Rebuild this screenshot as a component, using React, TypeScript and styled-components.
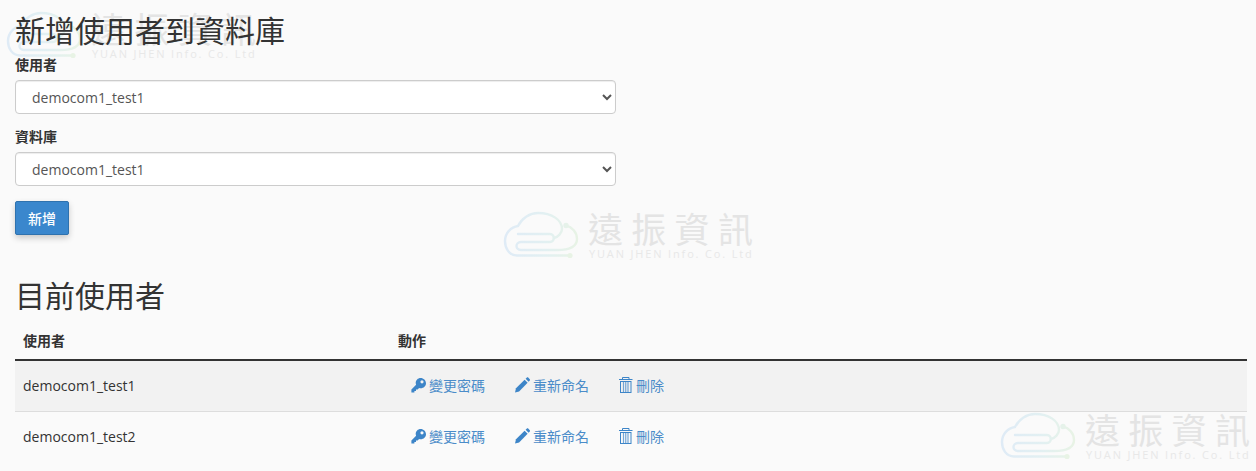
import React from 'react';
import styled, { createGlobalStyle } from 'styled-components';

const users = ['democom1_test1', 'democom1_test2'];

const GlobalStyle = createGlobalStyle`
  html, body { margin: 0; padding: 0; background: #fafafa; }
  body {
    font-family: "Open Sans", "Noto Sans CJK TC", sans-serif;
    font-size: 14px;
    color: #333;
    overflow: hidden;
  }
`;

const Page = styled.div`
  position: relative;
  width: 1256px;
  height: 471px;
  overflow: hidden;
`;

const Content = styled.div`
  position: relative;
  z-index: 1;
  padding: 0 9px 0 15px;
`;

const Mark = styled.div<{ $x: number; $y: number }>`
  position: absolute;
  left: ${p => p.$x}px;
  top: ${p => p.$y}px;
  display: flex;
  gap: 3px;
  pointer-events: none;
`;

const MarkText = styled.div`
  display: flex;
  flex-direction: column;
  width: 165px;
  padding-top: 5px;
`;

const MarkName = styled.div`
  font-family: "Noto Sans CJK TC", sans-serif;
  font-size: 35px;
  font-weight: 400;
  line-height: 36px;
  letter-spacing: 8.3px;
  margin-right: -9px;
  color: #e4e4e4;
  white-space: nowrap;
`;

const MarkSub = styled.div`
  font-size: 11px;
  font-weight: 400;
  line-height: 14px;
  letter-spacing: 1.85px;
  margin-top: 1px;
  padding-left: 1px;
  color: #e8e8e8;
  white-space: nowrap;
`;

const Heading = styled.h1`
  margin: 0;
  font-size: 30px;
  font-weight: 400;
  line-height: 33px;
  color: #333;
`;

const FormHeading = styled(Heading)`
  padding-top: 14px;
`;

const Field = styled.div`
  width: 601px;
  margin-top: 8px;
  margin-bottom: 13px;
`;

const Label = styled.label`
  display: block;
  font-weight: 700;
  font-size: 14px;
  line-height: 20px;
  margin-bottom: 5px;
`;

const Select = styled.select`
  display: block;
  width: 100%;
  height: 34px;
  box-sizing: border-box;
  padding: 6px 12px;
  font: inherit;
  font-size: 14px;
  color: #555;
  background: #fff;
  border: 1px solid #ccc;
  border-radius: 4px;
  box-shadow: inset 0 1px 1px rgba(0, 0, 0, 0.075);
`;

const SubmitButton = styled.button`
  display: block;
  width: 54px;
  height: 34px;
  margin-top: 15px;
  padding: 0;
  font: inherit;
  font-size: 14px;
  font-weight: 500;
  color: #fff;
  background: #3a87cd;
  border: 1px solid #2f72ae;
  border-radius: 2px;
  box-shadow: 0 3px 6px rgba(0, 0, 0, 0.2);
`;

const SectionHeading = styled(Heading)`
  margin-top: 44px;
`;

const Table = styled.table`
  width: 100%;
  margin-top: 8px;
  border-collapse: collapse;
  table-layout: fixed;
`;

const HeadCell = styled.th<{ $width?: number }>`
  width: ${p => (p.$width ? `${p.$width}px` : 'auto')};
  box-sizing: border-box;
  height: 40px;
  padding: 0 8px;
  text-align: left;
  font-size: 14px;
  font-weight: 700;
  border-bottom: 2px solid #333;
`;

const Row = styled.tr<{ $shaded?: boolean }>`
  background: ${p => (p.$shaded ? '#f2f2f2' : 'transparent')};
  &:last-child td { border-bottom: 0; }
`;

const Cell = styled.td`
  height: 51px;
  padding: 0 8px;
  box-sizing: border-box;
  font-size: 14px;
  border-bottom: 1px solid #ddd;
`;

const Actions = styled.div`
  display: flex;
  padding-left: 13px;
  margin-bottom: 2px;
  gap: 30px;
`;

const ActionLink = styled.a`
  display: flex;
  align-items: center;
  gap: 3px;
  color: #4a8cc9;
  font-size: 14px;
  text-decoration: none;
`;

const KeyIcon = () => (
  <svg width="15" height="16" viewBox="0 0 15 16" fill="#3d85c8">
    <path
      fillRule="evenodd"
      d="M9.6 1C12.5 1 15 3.3 15 6.2C15 9 12.6 11.2 9.8 11.2C9.2 11.2 8.6 11.1 8.1 10.9L6.6 12.4H5V14H3.4V15.5H0.4V12.4L5.1 7.7C4.9 7.2 4.7 6.7 4.7 6.1C4.7 3.3 6.9 1 9.6 1ZM11 3.2A1.6 1.6 0 1 0 11 6.4A1.6 1.6 0 1 0 11 3.2Z"
    />
  </svg>
);

const PencilIcon = () => (
  <svg width="15" height="16" viewBox="0 0 15 16" fill="#3d85c8">
    <path d="M0 15.5L1 11.2L9.6 2.8L12.6 5.8L4.1 14.4Z" />
    <path d="M10.6 1.8L11.9 0.6C12.3 0.2 12.8 0.2 13.2 0.6L14.8 2.2C15.1 2.6 15.1 3.1 14.8 3.5L13.6 4.8Z" />
  </svg>
);

const TrashIcon = () => (
  <svg width="14" height="16" viewBox="0 0 14 16" fill="none" stroke="#3d85c8" strokeWidth="1">
    <path d="M0 2.5H13.5M3.5 2.5V0.5H10V2.5" />
    <rect x="1.5" y="4.5" width="10.5" height="11" />
    <path d="M4.5 5V15M6.75 5V15M9 5V15" strokeWidth="1.2" opacity="0.7" />
  </svg>
);

const Watermark = ({ x, y }: { x: number; y: number }) => (
  <Mark $x={x} $y={y}>
    <svg width="85" height="60" viewBox="0 0 85 60" fill="none" strokeWidth="2.4" strokeLinecap="round">
      <defs>
        <linearGradient id="mark-fade" gradientUnits="userSpaceOnUse" x1="5" y1="0" x2="78" y2="0">
          <stop offset="0" stopColor="#dfebf6" />
          <stop offset="0.55" stopColor="#e2f0f2" />
          <stop offset="1" stopColor="#e8f3e5" />
        </linearGradient>
      </defs>
      <g stroke="url(#mark-fade)">
        <path d="M70 50.5H17C9 50.5 5 43 5 36C5 28 11 22 18 21C22 13 30 8 38 8C52 8 62 15 62 24C62 28 58 32 54 33" />
        <path d="M18 29H50C55 29 55 37 50 37H21C15 37 15 45 21 45H57C68 45 77 42 77 34C77 27 72 22 66 20.5" />
        <circle cx="66" cy="20.5" r="1.5" />
      </g>
      <circle cx="70" cy="50.5" r="2.6" fill="#e8f3e5" />
    </svg>
    <MarkText>
      <MarkName>遠振資訊</MarkName>
      <MarkSub>YUAN JHEN Info. Co. Ltd</MarkSub>
    </MarkText>
  </Mark>
);

export default function App() {
  return (
    <Page>
      <GlobalStyle />
      <Watermark x={3} y={5} />
      <Watermark x={500} y={205} />
      <Watermark x={997} y={406} />

      <Content>
        <FormHeading>新增使用者到資料庫</FormHeading>
        <Field>
          <Label>使用者</Label>
          <Select defaultValue={users[0]}>
            <option>{users[0]}</option>
          </Select>
        </Field>
        <Field>
          <Label>資料庫</Label>
          <Select defaultValue={users[0]}>
            <option>{users[0]}</option>
          </Select>
        </Field>
        <SubmitButton>新增</SubmitButton>

        <SectionHeading>目前使用者</SectionHeading>
        <Table>
          <thead>
            <tr>
              <HeadCell $width={375}>使用者</HeadCell>
              <HeadCell>動作</HeadCell>
            </tr>
          </thead>
          <tbody>
            {users.map((user, i) => (
              <Row key={user} $shaded={i === 0}>
                <Cell>{user}</Cell>
                <Cell>
                  <Actions>
                    <ActionLink><KeyIcon />變更密碼</ActionLink>
                    <ActionLink><PencilIcon />重新命名</ActionLink>
                    <ActionLink><TrashIcon />刪除</ActionLink>
                  </Actions>
                </Cell>
              </Row>
            ))}
          </tbody>
        </Table>
      </Content>
    </Page>
  );
}
